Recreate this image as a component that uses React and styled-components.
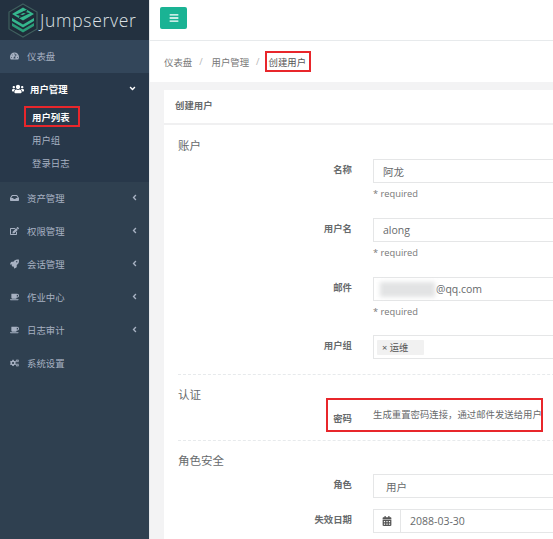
import React from 'react'
import styled, { createGlobalStyle } from 'styled-components'
import { FaTachometerAlt, FaUsers, FaInbox, FaEdit, FaRocket, FaCoffee, FaCogs, FaBars, FaCalendarAlt, FaAngleDown, FaAngleLeft } from 'react-icons/fa'

const GlobalStyle = createGlobalStyle`
    html, body {
        margin: 0;
        padding: 0;
        height: 100%;
        overflow: hidden;
    }
    body {
        font-family: "Open Sans", "Noto Sans CJK SC", sans-serif;
        font-size: 9.4px;
        color: #676a6c;
    }
`

const Page = styled.div`
    display: flex;
    width: 553px;
    height: 539px;
    overflow: hidden;
    background: #f3f3f4;
`

const Sidebar = styled.aside`
    flex: 0 0 150px;
    background: #2f4050;
    border-right: 1px solid #e7eaec;
    box-sizing: border-box;
`

const Brand = styled.div`
    height: 40px;
    display: flex;
    align-items: center;
    padding-left: 8px;
    gap: 2px;
    background: #233140;
    color: #dde1e5;
    font-size: 17.5px;
    font-weight: 300;
    letter-spacing: 0.7px;
`

const MenuItem = styled.div`
    position: relative;
    height: 33px;
    box-sizing: border-box;
    padding-bottom: 1px;
    display: flex;
    align-items: center;
    padding-left: ${(p) => (p.$open ? '12px' : '10px')};
    gap: ${(p) => (p.$open ? '6px' : '8px')};
    color: ${(p) => (p.$open ? '#ffffff' : '#a7b1c2')};
    font-weight: ${(p) => (p.$open ? 700 : 400)};
    background: ${(p) => (p.$current ? '#33465a' : 'transparent')};

    > svg:first-child {
        flex: 0 0 ${(p) => (p.$open ? '12px' : '9px')};
        font-size: ${(p) => (p.$open ? '12px' : '10px')};
    }
`

const Arrow = styled.span`
    margin-left: auto;
    margin-right: ${(p) => (p.$down ? 12 : 10)}px;
    display: flex;
    font-size: 9px;
    margin-top: -2px;
`

const OpenGroup = styled.div`
    background: #28384a;
    height: 109px;
`

const SubMenu = styled.div`
    display: flex;
    flex-direction: column;
    padding-top: 1px;
`

const SubItem = styled.div`
    height: 23px;
    line-height: 22px;
    padding-left: 32px;
    color: ${(p) => (p.$active ? '#ffffff' : '#a7b1c2')};
    font-weight: ${(p) => (p.$active ? 700 : 400)};
`

const Main = styled.main`
    flex: 1;
    min-width: 0;
    overflow: hidden;
`

const TopBar = styled.div`
    height: 41px;
    display: flex;
    align-items: flex-start;
    padding: 7px 0 0 10px;
    background: #fff;
    border-bottom: 1px solid #e7eaec;
    box-sizing: border-box;
`

const MenuButton = styled.div`
    width: 27px;
    height: 22px;
    border-radius: 2px;
    background: #1ab394;
    color: #fff;
    display: flex;
    align-items: center;
    justify-content: center;
    font-size: 10px;
`

const Breadcrumb = styled.div`
    height: 41px;
    display: flex;
    align-items: center;
    padding-left: 14px;
    background: #fff;
`

const Crumb = styled.span`
    color: ${(p) => (p.$strong ? '#555' : '#777')};
`

const Slash = styled.span`
    color: #b5b5b5;
    margin: 0 9px 0 7px;
`

const Annotated = styled.span`
    position: relative;
    &::after {
        content: "";
        position: absolute;
        left: ${(p) => p.$left}px;
        right: ${(p) => p.$right}px;
        top: -5px;
        bottom: -3px;
        border: 2px solid #e8262b;
    }
`

const Content = styled.div`
    padding: 8px 0 0 14px;
`

const Card = styled.section`
    width: 460px;
    background: #fff;
`

const CardTitle = styled.div`
    height: 35px;
    line-height: 32px;
    padding-left: 11px;
    font-weight: 600;
    color: #676a6c;
    border-bottom: 2px solid #f0f0f1;
    box-sizing: border-box;
`

const CardBody = styled.div`
    padding: 0 14px;
`

const FormSection = styled.div`
    padding-top: ${(p) => p.$top}px;
    padding-bottom: ${(p) => p.$bottom}px;
    border-bottom: ${(p) => (p.$dashed ? '1px dashed #e7eaec' : 'none')};
`

const Heading = styled.h3`
    margin: 0 0 ${(p) => p.$gap}px;
    font-size: 11.5px;
    line-height: 16px;
    font-weight: 400;
    color: #676a6c;
`

const Row = styled.div`
    display: grid;
    grid-template-columns: 174px 240px;
    column-gap: 21px;
    margin-bottom: ${(p) => p.$gap || 0}px;
`

const Label = styled.label`
    text-align: right;
    font-weight: 700;
    line-height: 22px;
    color: #676a6c;
`

const Field = styled.div`
    height: ${(p) => p.$height || 24}px;
    box-sizing: border-box;
    border: 1px solid #e5e6e7;
    display: flex;
    align-items: center;
    padding-left: ${(p) => p.$pad ?? 9}px;
    font-size: 10.5px;
    color: #676a6c;
`

const Help = styled.div`
    margin-top: 4px;
    height: 14px;
    line-height: 14px;
    font-size: 9.3px;
    color: #777;
`

const BlurredName = styled.span`
    width: 55px;
    height: 15px;
    margin-right: 1px;
    background: #e2e3e4;
    filter: blur(2px);
`

const Tag = styled.span`
    display: flex;
    align-items: center;
    gap: 1px;
    width: 47px;
    height: 15px;
    margin-left: -6px;
    padding-left: 5px;
    box-sizing: border-box;
    background: #f1f1f1;
    border-radius: 1px;
    font-size: 9.3px;
    color: #555;
`

const PasswordRow = styled(Row)`
    position: relative;
    &::after {
        content: "";
        position: absolute;
        left: 148px;
        top: -6px;
        width: 217px;
        height: 34px;
        box-sizing: border-box;
        border: 2px solid #e8262b;
    }
`

const PasswordLabel = styled(Label)`
    padding-top: 4px;
`

const PasswordText = styled.div`
    line-height: 26px;
    white-space: nowrap;
    margin-top: -2px;
`

const AddOn = styled.span`
    width: 26px;
    height: 100%;
    border-right: 1px solid #e5e6e7;
    display: flex;
    align-items: center;
    justify-content: center;
    font-size: 10px;
    color: #555;
`

const DateText = styled.span`
    padding-left: 9px;
`

const menu = [
    { icon: FaInbox, name: '资产管理', arrow: true },
    { icon: FaEdit, name: '权限管理', arrow: true },
    { icon: FaRocket, name: '会话管理', arrow: true },
    { icon: FaCoffee, name: '作业中心', arrow: true },
    { icon: FaCoffee, name: '日志审计', arrow: true },
    { icon: FaCogs, name: '系统设置' },
]

// stacked layers inside a hexagon, with the S cut out of the top layer
const Logo = () => (
    <svg width="30" height="35" viewBox="0 0 30 35">
        <path d="M15 1 L29 9 V26 L15 34 L1 26 V9 Z" fill="#1f2c39" stroke="#3f5f5e" strokeWidth="1.2" />
        <path d="M15 4.5 L26 11 L15 17.5 L4 11 Z" fill="#35b78e" />
        <path d="M4 15 L15 21.5 L26 15 L26 18 L15 24.5 L4 18 Z" fill="#35b78e" />
        <path d="M4 20 L15 26.5 L26 20 L26 23 L15 29.5 L4 23 Z" fill="#2b9d79" />
        <path d="M19 7.5 L10 11.5 L15 13 M11 14.5 L20 10.5 L15 9" fill="none" stroke="#1f2c39" strokeWidth="1.4" />
    </svg>
)

const App = () => {
    return (
        <Page>
            <GlobalStyle />
            <Sidebar>
                <Brand><Logo />Jumpserver</Brand>
                <MenuItem $current><FaTachometerAlt />仪表盘</MenuItem>
                <OpenGroup>
                    <MenuItem $open>
                        <FaUsers />用户管理
                        <Arrow $down><FaAngleDown /></Arrow>
                    </MenuItem>
                    <SubMenu>
                        <SubItem $active><Annotated $left={-8} $right={-10}>用户列表</Annotated></SubItem>
                        <SubItem>用户组</SubItem>
                        <SubItem>登录日志</SubItem>
                    </SubMenu>
                </OpenGroup>
                {menu.map((item) => (
                    <MenuItem key={item.name}>
                        <item.icon />{item.name}
                        {item.arrow && <Arrow><FaAngleLeft /></Arrow>}
                    </MenuItem>
                ))}
            </Sidebar>
            <Main>
                <TopBar>
                    <MenuButton><FaBars /></MenuButton>
                </TopBar>
                <Breadcrumb>
                    <Crumb>仪表盘</Crumb><Slash>/</Slash>
                    <Crumb>用户管理</Crumb><Slash>/</Slash>
                    <Crumb $strong><Annotated $left={-4} $right={-5}>创建用户</Annotated></Crumb>
                </Breadcrumb>
                <Content>
                    <Card>
                        <CardTitle>创建用户</CardTitle>
                        <CardBody>
                            <FormSection $top={13} $bottom={15} $dashed>
                                <Heading $gap={5}>账户</Heading>
                                <Row $gap={17}>
                                    <Label>名称</Label>
                                    <div>
                                        <Field>阿龙</Field>
                                        <Help>* required</Help>
                                    </div>
                                </Row>
                                <Row $gap={17}>
                                    <Label>用户名</Label>
                                    <div>
                                        <Field>along</Field>
                                        <Help>* required</Help>
                                    </div>
                                </Row>
                                <Row $gap={16}>
                                    <Label>邮件</Label>
                                    <div>
                                        <Field $pad={6}><BlurredName />@qq.com</Field>
                                        <Help>* required</Help>
                                    </div>
                                </Row>
                                <Row>
                                    <Label>用户组</Label>
                                    <Field $pad={9}><Tag>× 运维</Tag></Field>
                                </Row>
                            </FormSection>
                            <FormSection $top={12} $bottom={10} $dashed>
                                <Heading $gap={1}>认证</Heading>
                                <PasswordRow>
                                    <PasswordLabel>密码</PasswordLabel>
                                    <PasswordText>生成重置密码连接，通过邮件发送给用户</PasswordText>
                                </PasswordRow>
                            </FormSection>
                            <FormSection $top={12} $bottom={20}>
                                <Heading $gap={5}>角色安全</Heading>
                                <Row $gap={11}>
                                    <Label>角色</Label>
                                    <Field $pad={12}>用户</Field>
                                </Row>
                                <Row>
                                    <Label>失效日期</Label>
                                    <Field $pad={0}>
                                        <AddOn><FaCalendarAlt /></AddOn>
                                        <DateText>2088-03-30</DateText>
                                    </Field>
                                </Row>
                            </FormSection>
                        </CardBody>
                    </Card>
                </Content>
            </Main>
        </Page>
    )
}

export default App
